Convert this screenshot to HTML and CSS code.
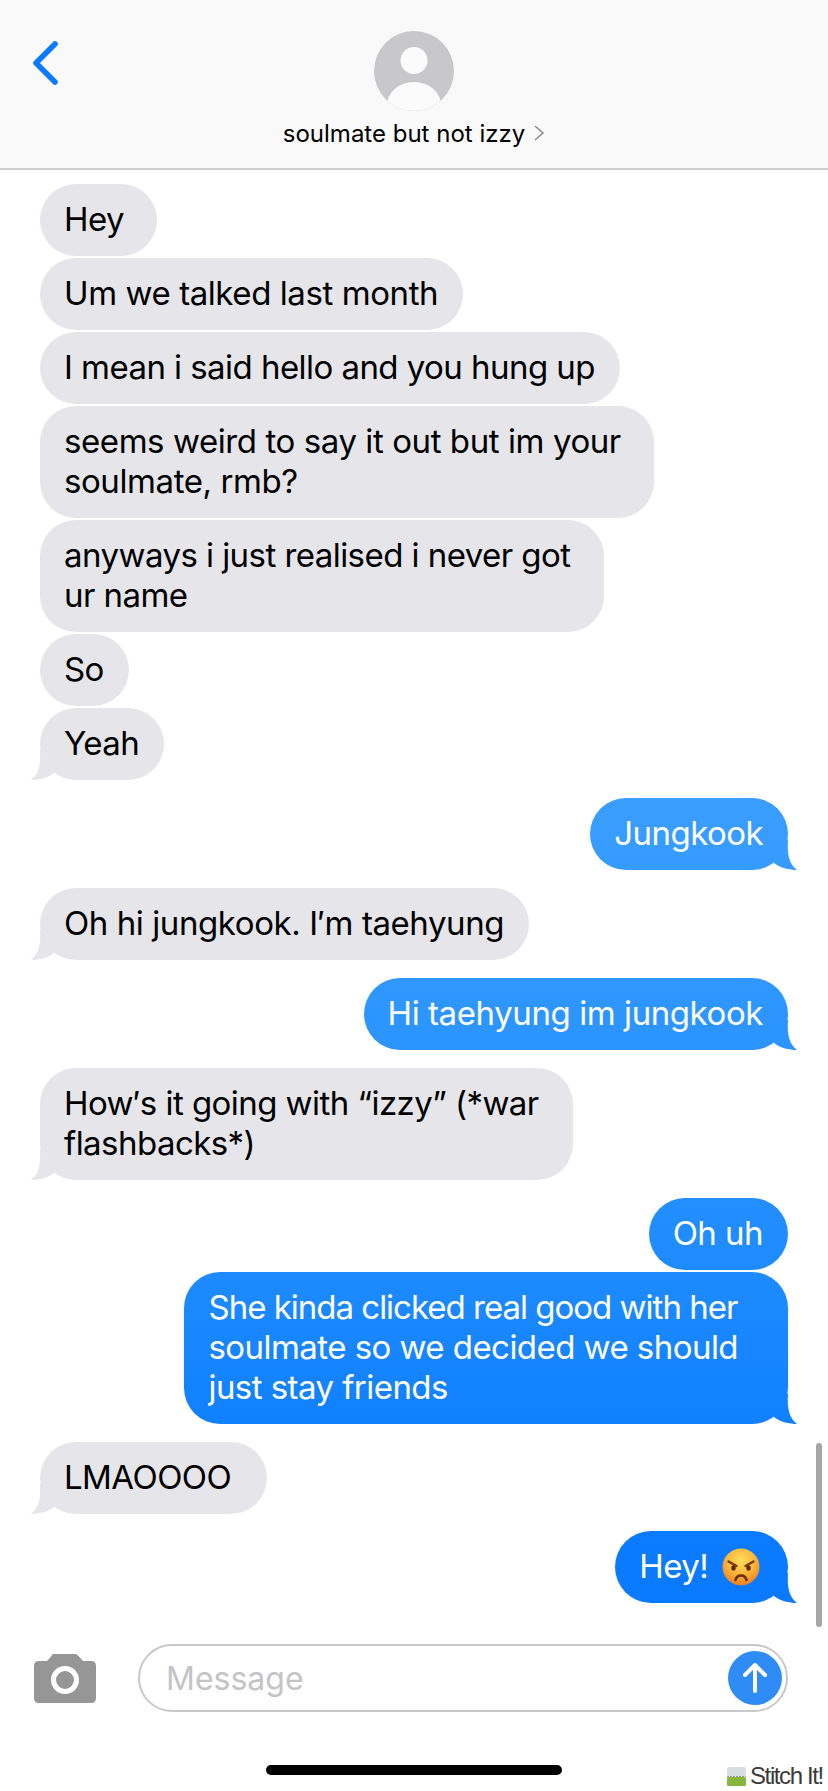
FILE: index.html
```html
<!DOCTYPE html>
<html lang="en">
<head>
<meta charset="utf-8">
<title>soulmate but not izzy</title>
<link rel="stylesheet" href="styles.css">
</head>
<body>
<div class="screen">
  <header class="nav">
    <svg class="back" viewBox="0 0 30 46" aria-hidden="true"><path d="M26 4 7 23l19 19"/></svg>
    <svg class="avatar" viewBox="0 0 80 80" aria-hidden="true">
      <defs><clipPath id="av"><circle cx="40" cy="40" r="40"/></clipPath></defs>
      <circle class="av-bg" cx="40" cy="40" r="40"/>
      <g clip-path="url(#av)">
        <circle class="av-fg" cx="40" cy="29.500" r="13.500"/>
        <ellipse class="av-fg" cx="40" cy="74" rx="27" ry="23"/>
      </g>
    </svg>
    <div class="contact">
      <span class="contact-name">soulmate but not izzy</span>
      <svg class="contact-chev" viewBox="0 0 12 16" aria-hidden="true"><path d="M2 1l8 7-8 7"/></svg>
    </div>
  </header>

  <main class="thread">
    <div class="group">
      <div class="bubble in pad-33">Hey</div>
      <div class="bubble in loose">Um we talked last month</div>
      <div class="bubble in">I mean i said hello and you hung up</div>
      <div class="bubble in pad-33 loose">seems weird to say it out but im your<br>soulmate, rmb?</div>
      <div class="bubble in pad-33">anyways i just realised i never got<br>ur name</div>
      <div class="bubble in">So</div>
      <div class="bubble in tail">Yeah</div>
    </div>
    <div class="group"><div class="bubble out tail">Jungkook</div></div>
    <div class="group"><div class="bubble in tail loose">Oh hi jungkook. I′m taehyung</div></div>
    <div class="group"><div class="bubble out tail loose">Hi taehyung im jungkook</div></div>
    <div class="group"><div class="bubble in tail pad-34">How′s it going with “izzy” (*war<br>flashbacks*)</div></div>
    <div class="group">
      <div class="bubble out">Oh uh</div>
      <div class="bubble out tail pad-50"><span class="snug">She kinda clicked real good with her</span><br>soulmate so we decided we should<br>just stay friends</div>
    </div>
    <div class="group"><div class="bubble in tail pad-36">LMAOOOO</div></div>
    <div class="group group-end">
      <div class="bubble out tail pad-28">Hey!
        <svg class="emoji" viewBox="0 0 38 38" role="img" aria-label="angry face">
          <defs>
            <radialGradient id="face" cx="50%" cy="32%" r="70%">
              <stop offset="0" stop-color="#ffdc5a"/>
              <stop offset=".55" stop-color="#fdb53a"/>
              <stop offset="1" stop-color="#ec7a1e"/>
            </radialGradient>
          </defs>
          <circle cx="19" cy="19" r="18.500" fill="url(#face)"/>
          <path class="brow" d="M6.500 13.500l8 4.500M31.500 13.500l-8 4.500"/>
          <ellipse class="eye" cx="11.500" cy="20" rx="2.200" ry="2.800"/>
          <ellipse class="eye" cx="26.500" cy="20" rx="2.200" ry="2.800"/>
          <path class="mouth" d="M13.500 32c1.500-6 9.500-6 11 0"/>
        </svg>
      </div>
    </div>
    <div class="scrollbar"></div>
  </main>

  <div class="composer">
    <svg class="camera" viewBox="0 0 62 49" aria-hidden="true">
      <path class="cam-body" d="M19 0h22q2 0 3.500 2L49 7h8q5 0 5 5v32q0 5-5 5H5q-5 0-5-5V12q0-5 5-5h8l4.500-5Q18 0 19 0z"/>
      <circle class="cam-ring" cx="31" cy="26" r="11.500"/>
    </svg>
    <div class="field">
      <span class="placeholder">Message</span>
      <svg class="send" viewBox="0 0 54 54" aria-hidden="true">
        <circle class="send-bg" cx="27" cy="27" r="27"/>
        <path class="send-arrow" d="M27 40V14M17 24l10-10 10 10"/>
      </svg>
    </div>
  </div>

  <footer class="foot">
    <div class="home-bar"></div>
    <div class="stitch">
      <svg class="stitch-icon" viewBox="0 0 19 19" aria-hidden="true">
        <rect class="st-top" width="19" height="9.500" rx="2"/>
        <rect class="st-bot" y="10" width="19" height="9" rx="1.500"/>
        <path class="st-dash" d="M0 9.500h19"/>
      </svg>
      <span class="stitch-text">Stitch It!</span>
    </div>
  </footer>
</div>
</body>
</html>
```

FILE: styles.css
```css
* { box-sizing: border-box; }
html, body { margin: 0; padding: 0; background: #fff; }
.screen {
  position: relative;
  width: 828px;
  height: 1791px;
  overflow: hidden;
  display: flex;
  flex-direction: column;
  font-family: Inter, "Noto Sans", sans-serif;
  color: #000;
}

/* Navigation bar */
.nav {
  position: relative;
  flex: 0 0 170px;
  background: #f9f9f9;
  border-bottom: 2px solid #cfcfd1;
  display: flex;
  flex-direction: column;
  align-items: center;
  padding-top: 31px;
}
.back {
  position: absolute;
  left: 29px;
  top: 40px;
  width: 30px;
  height: 46px;
  fill: none;
  stroke: #0a7aff;
  stroke-width: 5.500;
  stroke-linecap: round;
  stroke-linejoin: round;
}
.avatar { width: 80px; height: 80px; display: block; }
.av-bg { fill: #c8c8ca; }
.av-fg { fill: #fbfbfb; }
.contact {
  margin-top: 4px;
  display: flex;
  align-items: center;
  gap: 8px;
  height: 36px;
}
.contact-name { font-size: 24px; }
.contact-chev {
  width: 12px;
  height: 16px;
  fill: none;
  stroke: #8e8e93;
  stroke-width: 1.600;
}

/* Thread */
.thread {
  position: relative;
  flex: 1 1 auto;
  display: flex;
  flex-direction: column;
  gap: 18px;
  padding: 14px 40px 0;
}
.group { display: flex; flex-direction: column; gap: 2px; }
.group-end { margin-top: -1px; }
.bubble {
  position: relative;
  padding: 15px 25px 17px 24px;
  border-radius: 36px;
  font-size: 33px;
  line-height: 40px;
  white-space: nowrap;
  letter-spacing: -0.55px;
}
.in { align-self: flex-start; background: #e5e5ea; color: #000; }
.out {
  align-self: flex-end;
  color: #fff;
  background: linear-gradient(#40a6ff 0, #3a9eff 800px, #1f8cff 1250px, #0b7bff 1500px, #0a78fb 1791px) fixed;
}
.loose { letter-spacing: -0.42px; }
.pad-28 { padding-right: 28px; }
.pad-33 { padding-right: 33px; }
.pad-34 { padding-right: 34px; }
.pad-36 { padding-right: 36px; }
.pad-50 { padding-right: 50px; }
.snug { letter-spacing: -1px; }
.tail::after {
  content: "";
  position: absolute;
  bottom: 0;
  width: 26px;
  height: 30px;
  background: inherit;
}
.in.tail::after {
  left: -9px;
  clip-path: path("M9 0C10 14 8 24 0 30C7 30 17 28 23 23L26 0Z");
}
.out.tail::after {
  right: -9px;
  clip-path: path("M17 0C16 14 18 24 26 30C19 30 9 28 3 23L0 0Z");
}
.emoji {
  width: 38px;
  height: 38px;
  margin-left: 5px;
  vertical-align: -8px;
}
.brow { fill: none; stroke: #7a3a0c; stroke-width: 2.400; stroke-linecap: round; }
.eye { fill: #5a2b08; }
.mouth { fill: none; stroke: #6b300a; stroke-width: 2.600; stroke-linecap: round; }

.scrollbar {
  position: absolute;
  right: 6px;
  top: 1273px;
  width: 6px;
  height: 184px;
  border-radius: 3px;
  background: #a6a6a6;
}

/* Composer */
.composer {
  flex: 0 0 68px;
  display: flex;
  align-items: center;
  gap: 42px;
  padding: 0 40px 0 34px;
}
.camera { flex: 0 0 62px; height: 49px; }
.cam-body { fill: #969696; }
.cam-ring { fill: #969696; stroke: #fff; stroke-width: 5px; }
.field {
  flex: 1 1 auto;
  height: 68px;
  border: 2.500px solid #c8c8ca;
  border-radius: 34px;
  display: flex;
  align-items: center;
  justify-content: space-between;
  padding: 0 4px 0 26px;
  background: #fff;
}
.placeholder { font-size: 32px; color: #c4c4c6; }
.send { width: 54px; height: 54px; }
.send-bg { fill: #2f8bf5; }
.send-arrow {
  fill: none;
  stroke: #fff;
  stroke-width: 4;
  stroke-linecap: round;
  stroke-linejoin: round;
}

/* Footer */
.foot {
  position: relative;
  flex: 0 0 79px;
  display: flex;
  justify-content: center;
  padding-top: 53px;
}
.home-bar { width: 296px; height: 10px; border-radius: 5px; background: #000; }
.stitch {
  position: absolute;
  left: 727px;
  top: 50px;
  display: flex;
  align-items: center;
  gap: 4px;
}
.stitch-icon { width: 19px; height: 19px; }
.st-top { fill: #d8dde0; }
.st-bot { fill: #86b53e; }
.st-dash { stroke: #9a9a9a; stroke-width: 1; stroke-dasharray: 2 1; }
.stitch-text {
  font-family: "Liberation Sans", Arial, sans-serif;
  font-size: 24px;
  letter-spacing: -1.400px;
  color: #3a3a3a;
  white-space: nowrap;
}
```
